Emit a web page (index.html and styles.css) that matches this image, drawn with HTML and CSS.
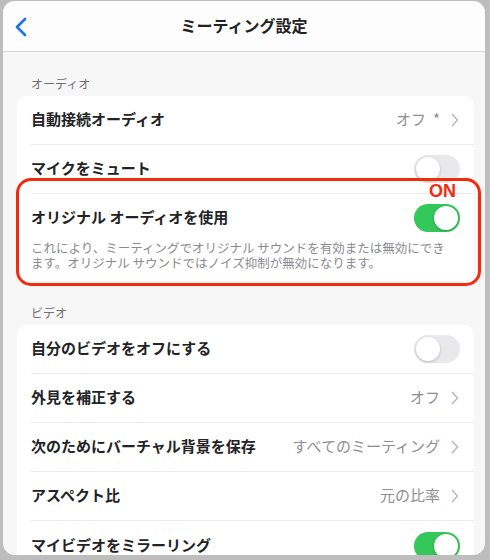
FILE: index.html
```html
<!DOCTYPE html>
<html lang="ja">
<head>
<meta charset="utf-8">
<link rel="stylesheet" href="styles.css">
</head>
<body>
<div class="window">
  <header class="header">
    <svg class="back" width="14" height="20" viewBox="0 0 14 20"><path d="M11 2 L3 10 L11 18" fill="none" stroke="#1a73e8" stroke-width="2.6" stroke-linecap="round" stroke-linejoin="round"/></svg>
    <h1 class="title">ミーティング設定</h1>
  </header>
  <main class="content">
    <div class="section-label">オーディオ</div>
    <div class="card">
      <div class="row">
        <div class="row-body">
          <span class="row-title">自動接続オーディオ</span>
          <span class="value">オフ<span class="star">*</span></span>
          <svg class="chev" width="8" height="14" viewBox="0 0 8 14"><path d="M1.5 1.5 L6.5 7 L1.5 12.5" fill="none" stroke="#bcbcc0" stroke-width="1.7" stroke-linecap="round" stroke-linejoin="round"/></svg>
        </div>
      </div>
      <div class="row">
        <div class="row-body">
          <span class="row-title">マイクをミュート</span>
          <span class="toggle"><span class="knob"></span></span>
        </div>
      </div>
      <div class="row row-tall">
        <div class="row-body tall-body">
          <div class="tall-head">
            <span class="row-title">オリジナル オーディオを使用</span>
            <span class="toggle on"><span class="knob"></span></span>
          </div>
          <p class="desc">これにより、ミーティングでオリジナル サウンドを有効または無効にできます。オリジナル サウンドではノイズ抑制が無効になります。</p>
        </div>
        <div class="highlight"></div>
        <div class="on-label">ON</div>
      </div>
    </div>

    <div class="section-label section-gap">ビデオ</div>
    <div class="card">
      <div class="row">
        <div class="row-body">
          <span class="row-title">自分のビデオをオフにする</span>
          <span class="toggle"><span class="knob"></span></span>
        </div>
      </div>
      <div class="row">
        <div class="row-body">
          <span class="row-title">外見を補正する</span>
          <span class="value">オフ</span>
          <svg class="chev" width="8" height="14" viewBox="0 0 8 14"><path d="M1.5 1.5 L6.5 7 L1.5 12.5" fill="none" stroke="#bcbcc0" stroke-width="1.7" stroke-linecap="round" stroke-linejoin="round"/></svg>
        </div>
      </div>
      <div class="row">
        <div class="row-body">
          <span class="row-title">次のためにバーチャル背景を保存</span>
          <span class="value">すべてのミーティング</span>
          <svg class="chev" width="8" height="14" viewBox="0 0 8 14"><path d="M1.5 1.5 L6.5 7 L1.5 12.5" fill="none" stroke="#bcbcc0" stroke-width="1.7" stroke-linecap="round" stroke-linejoin="round"/></svg>
        </div>
      </div>
      <div class="row">
        <div class="row-body">
          <span class="row-title">アスペクト比</span>
          <span class="value">元の比率</span>
          <svg class="chev" width="8" height="14" viewBox="0 0 8 14"><path d="M1.5 1.5 L6.5 7 L1.5 12.5" fill="none" stroke="#bcbcc0" stroke-width="1.7" stroke-linecap="round" stroke-linejoin="round"/></svg>
        </div>
      </div>
      <div class="row">
        <div class="row-body">
          <span class="row-title">マイビデオをミラーリング</span>
          <span class="toggle on"><span class="knob"></span></span>
        </div>
      </div>
    </div>
  </main>
</div>
</body>
</html>
```

FILE: styles.css
```css
* { box-sizing: border-box; }
html, body { margin: 0; padding: 0; }
body {
  background: #bdbdbd;
  font-family: "Noto Sans CJK JP", "Noto Sans", sans-serif;
  color: #1c1c1e;
  width: 490px;
  height: 560px;
  overflow: hidden;
}
.window {
  margin: 1px 5px 0 3px;
  height: 554px;
  border-radius: 12px;
  overflow: hidden;
  background: #f7f7f7;
}
.header {
  height: 51px;
  background: #fdfdfd;
  border-bottom: 1px solid #d6d6d8;
  display: flex;
  align-items: center;
  justify-content: center;
  position: relative;
}
.back {
  position: absolute;
  left: 11px;
  top: 16px;
}
.title {
  margin: 0 0 2px;
  font-size: 16px;
  font-weight: 700;
  line-height: 20px;
  color: #222;
}
.content {
  padding: 24px 11px 0 14px;
}
.section-label {
  font-size: 12px;
  line-height: 16px;
  color: #6e6e73;
  padding-left: 14px;
  margin-bottom: 4px;
}
.section-gap { margin-top: 24px; }
.card {
  background: #fff;
  border-radius: 10px;
}
.row {
  padding-left: 14px;
  position: relative;
}
.row-body {
  display: flex;
  align-items: center;
  min-height: 49px;
  padding-right: 14px;
  border-bottom: 1px solid #ececee;
}
.row:last-child .row-body { border-bottom: none; }
.row-title {
  flex: 1;
  font-size: 15px;
  font-weight: 600;
  line-height: 20px;
  padding-bottom: 2px;
  color: #232326;
  white-space: nowrap;
}
.value {
  font-size: 15px;
  line-height: 20px;
  padding-bottom: 2px;
  color: #8e8e93;
  margin-right: 11px;
  white-space: nowrap;
}
.star { margin-left: 7px; }
.chev { flex: none; margin-right: 1px; }
.toggle {
  flex: none;
  width: 46px;
  height: 28px;
  border-radius: 14px;
  background: #e9e9eb;
  position: relative;
}
.knob {
  position: absolute;
  top: 2px;
  left: 2px;
  width: 24px;
  height: 24px;
  border-radius: 50%;
  background: #fff;
  box-shadow: 0 1px 3px rgba(0,0,0,0.22);
}
.toggle.on { background: #34c759; }
.toggle.on .knob { left: 20px; }
.tall-body {
  flex-direction: column;
  align-items: stretch;
  padding-top: 10px;
  padding-bottom: 11px;
}
.tall-head {
  display: flex;
  align-items: center;
  height: 28px;
}
.desc {
  margin: 8px 0 0;
  font-size: 12.5px;
  line-height: 15px;
  color: #8a8a8e;
  max-width: 420px;
}
.highlight {
  position: absolute;
  left: -1px;
  right: -7px;
  top: -16px;
  bottom: -5px;
  border: 3px solid #f52a0c;
  border-radius: 15px;
  pointer-events: none;
}
.on-label {
  position: absolute;
  top: -13px;
  right: 18px;
  font-family: "Liberation Sans", Arial, sans-serif;
  font-weight: 700;
  font-size: 18px;
  line-height: 20px;
  color: #f52a0c;
}
```
